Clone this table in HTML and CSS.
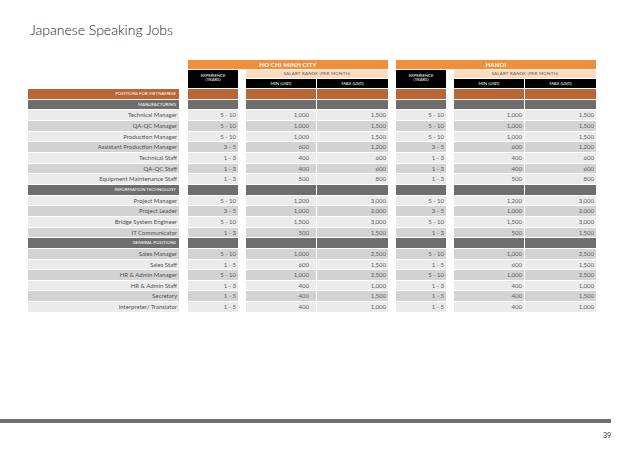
FILE: index.html
```html
<!DOCTYPE html>
<html>
<head>
<meta charset="utf-8">
<link rel="stylesheet" href="styles.css">
</head>
<body>
<div class="page">
  <h1 class="title">Japanese Speaking Jobs</h1>
  <div class="head">
    <div class="city">
      <div class="city-name">HO CHI MINH CITY</div>
      <div class="city-sub">
        <div class="exp-head">EXPERIENCE<br>(YEARS)</div>
        <div class="salary">
          <div class="salary-title">SALARY RANGE (PER MONTH)</div>
          <div class="salary-cols"><div class="mm mn">MIN (USD)</div><div class="mm mx">MAX (USD)</div></div>
        </div>
      </div>
    </div>
    <div class="city">
      <div class="city-name">HANOI</div>
      <div class="city-sub">
        <div class="exp-head">EXPERIENCE<br>(YEARS)</div>
        <div class="salary">
          <div class="salary-title">SALARY RANGE (PER MONTH)</div>
          <div class="salary-cols"><div class="mm mn">MIN (USD)</div><div class="mm mx">MAX (USD)</div></div>
        </div>
      </div>
    </div>
  </div>
  <div class="rows">
    <div class="row sec pos"><div class="c lab">POSITIONS FOR VIETNAMESE</div><div class="c exp"></div><div class="c min"></div><div class="c max"></div><div class="c exp"></div><div class="c min"></div><div class="c max"></div></div>
    <div class="row sec grp"><div class="c lab">MANUFACTURING</div><div class="c exp"></div><div class="c min"></div><div class="c max"></div><div class="c exp"></div><div class="c min"></div><div class="c max"></div></div>
    <div class="row lt"><div class="c lab">Technical Manager</div><div class="c exp">5 - 10</div><div class="c min hcm">1,000</div><div class="c max">1,500</div><div class="c exp">5 - 10</div><div class="c min">1,000</div><div class="c max">1,500</div></div>
    <div class="row dk"><div class="c lab">QA-QC Manager</div><div class="c exp">5 - 10</div><div class="c min hcm">1,000</div><div class="c max">1,500</div><div class="c exp">5 - 10</div><div class="c min">1,000</div><div class="c max">1,500</div></div>
    <div class="row lt"><div class="c lab">Production Manager</div><div class="c exp">5 - 10</div><div class="c min hcm">1,000</div><div class="c max">1,500</div><div class="c exp">5 - 10</div><div class="c min">1,000</div><div class="c max">1,500</div></div>
    <div class="row dk"><div class="c lab">Assistant Production Manager</div><div class="c exp">3 - 5</div><div class="c min hcm">600</div><div class="c max">1,200</div><div class="c exp">3 - 5</div><div class="c min">600</div><div class="c max">1,200</div></div>
    <div class="row lt"><div class="c lab">Technical Staff</div><div class="c exp">1 - 3</div><div class="c min hcm">400</div><div class="c max">600</div><div class="c exp">1 - 3</div><div class="c min">400</div><div class="c max">600</div></div>
    <div class="row dk"><div class="c lab">QA-QC Staff</div><div class="c exp">1 - 3</div><div class="c min hcm">400</div><div class="c max">600</div><div class="c exp">1 - 3</div><div class="c min">400</div><div class="c max">600</div></div>
    <div class="row lt"><div class="c lab">Equipment Maintenance Staff</div><div class="c exp">1 - 3</div><div class="c min hcm">500</div><div class="c max">800</div><div class="c exp">1 - 3</div><div class="c min">500</div><div class="c max">800</div></div>
    <div class="row sec grp"><div class="c lab">INFORMATION TECHNOLOGY</div><div class="c exp"></div><div class="c min"></div><div class="c max"></div><div class="c exp"></div><div class="c min"></div><div class="c max"></div></div>
    <div class="row lt"><div class="c lab">Project Manager</div><div class="c exp">5 - 10</div><div class="c min hcm">1,200</div><div class="c max">3,000</div><div class="c exp">5 - 10</div><div class="c min">1,200</div><div class="c max">3,000</div></div>
    <div class="row dk"><div class="c lab">Project Leader</div><div class="c exp">3 - 5</div><div class="c min hcm">1,000</div><div class="c max">2,000</div><div class="c exp">3 - 5</div><div class="c min">1,000</div><div class="c max">2,000</div></div>
    <div class="row lt"><div class="c lab">Bridge System Engineer</div><div class="c exp">5 - 10</div><div class="c min hcm">1,500</div><div class="c max">3,000</div><div class="c exp">5 - 10</div><div class="c min">1,500</div><div class="c max">3,000</div></div>
    <div class="row dk"><div class="c lab">IT Communicator</div><div class="c exp">1 - 3</div><div class="c min hcm">500</div><div class="c max">1,500</div><div class="c exp">1 - 3</div><div class="c min">500</div><div class="c max">1,500</div></div>
    <div class="row sec grp"><div class="c lab">GENERAL POSITIONS</div><div class="c exp"></div><div class="c min"></div><div class="c max"></div><div class="c exp"></div><div class="c min"></div><div class="c max"></div></div>
    <div class="row dk"><div class="c lab">Sales Manager</div><div class="c exp">5 - 10</div><div class="c min hcm">1,000</div><div class="c max">2,500</div><div class="c exp">5 - 10</div><div class="c min">1,000</div><div class="c max">2,500</div></div>
    <div class="row lt"><div class="c lab">Sales Staff</div><div class="c exp">1 - 5</div><div class="c min hcm">600</div><div class="c max">1,500</div><div class="c exp">1 - 5</div><div class="c min">600</div><div class="c max">1,500</div></div>
    <div class="row dk"><div class="c lab">HR &amp; Admin Manager</div><div class="c exp">5 - 10</div><div class="c min hcm">1,000</div><div class="c max">2,500</div><div class="c exp">5 - 10</div><div class="c min">1,000</div><div class="c max">2,500</div></div>
    <div class="row lt"><div class="c lab">HR &amp; Admin Staff</div><div class="c exp">1 - 3</div><div class="c min hcm">400</div><div class="c max">1,000</div><div class="c exp">1 - 3</div><div class="c min">400</div><div class="c max">1,000</div></div>
    <div class="row dk"><div class="c lab">Secretary</div><div class="c exp">1 - 5</div><div class="c min hcm">400</div><div class="c max">1,500</div><div class="c exp">1 - 5</div><div class="c min">400</div><div class="c max">1,500</div></div>
    <div class="row lt"><div class="c lab">Interpreter/ Translator</div><div class="c exp">1 - 5</div><div class="c min hcm">400</div><div class="c max">1,000</div><div class="c exp">1 - 5</div><div class="c min">400</div><div class="c max">1,000</div></div>
  </div>
  <div class="footer-line"></div>
  <div class="page-num">39</div>
</div>
</body>
</html>
```

FILE: styles.css
```css
html, body {
  margin: 0;
  padding: 0;
  background: #ffffff;
}
.page {
  width: 638px;
  height: 452px;
  overflow: hidden;
  font-family: Lato, "Open Sans", sans-serif;
  color: #555555;
}
.title {
  margin: 21px 0 0 30px;
  font-size: 14px;
  line-height: 17px;
  font-weight: 300;
  color: #222222;
}
.head {
  display: flex;
  gap: 8px;
  margin: 22px 0 0 188px;
}
.city {
  width: 200px;
  display: flex;
  flex-direction: column;
  gap: 1px;
}
.city-name {
  height: 9px;
  background: #f18e3a;
  color: #ffffff;
  font-weight: 700;
  font-size: 6px;
  line-height: 9px;
  text-align: center;
  letter-spacing: 0.2px;
}
.city-sub {
  display: flex;
  gap: 8px;
}
.exp-head {
  width: 50px;
  height: 18px;
  box-sizing: border-box;
  padding-top: 4px;
  background: #000000;
  color: #ffffff;
  font-size: 4.2px;
  line-height: 3.6px;
  text-align: center;
}
.salary {
  width: 142px;
  display: flex;
  flex-direction: column;
  gap: 1px;
}
.salary-title {
  height: 8px;
  background: #fcdcbf;
  color: #555555;
  font-size: 4.4px;
  line-height: 8px;
  text-align: center;
  letter-spacing: 0.25px;
}
.salary-cols {
  display: flex;
  gap: 1px;
}
.mm {
  height: 9px;
  background: #000000;
  color: #ffffff;
  font-size: 4.4px;
  line-height: 9px;
  text-align: center;
}
.mn { width: 70px; }
.mx { width: 71px; }
.rows {
  margin: 1px 0 0 28px;
  display: flex;
  flex-direction: column;
  gap: 1px;
}
.row {
  display: flex;
  height: 9.67px;
}
.c {
  box-sizing: border-box;
  height: 100%;
  font-size: 6px;
  line-height: 9.67px;
  text-align: right;
  padding-right: 2px;
  white-space: nowrap;
  color: #606060;
}
.lab {
  width: 151px;
  margin-right: 1px;
  color: #505050;
}
.exp {
  width: 50px;
  margin-left: 8px;
}
.min {
  width: 70px;
  margin-left: 8px;
}
.min.hcm {
  padding-right: 7px;
}
.max {
  width: 71px;
  margin-left: 1px;
}
.lt .c { background: #ebebeb; }
.dk .c { background: #d3d3d3; }
.pos .c { background: #bb6434; }
.grp .c { background: #6e6e6e; }
.sec .lab {
  color: #ffffff;
  font-size: 4.4px;
  padding-right: 3px;
}
.footer-line {
  width: 611px;
  height: 4px;
  margin-top: 107px;
  background: #6f6f6f;
}
.page-num {
  width: 611px;
  margin-top: 8px;
  text-align: right;
  font-size: 7px;
  line-height: 9px;
  color: #333333;
}
```
